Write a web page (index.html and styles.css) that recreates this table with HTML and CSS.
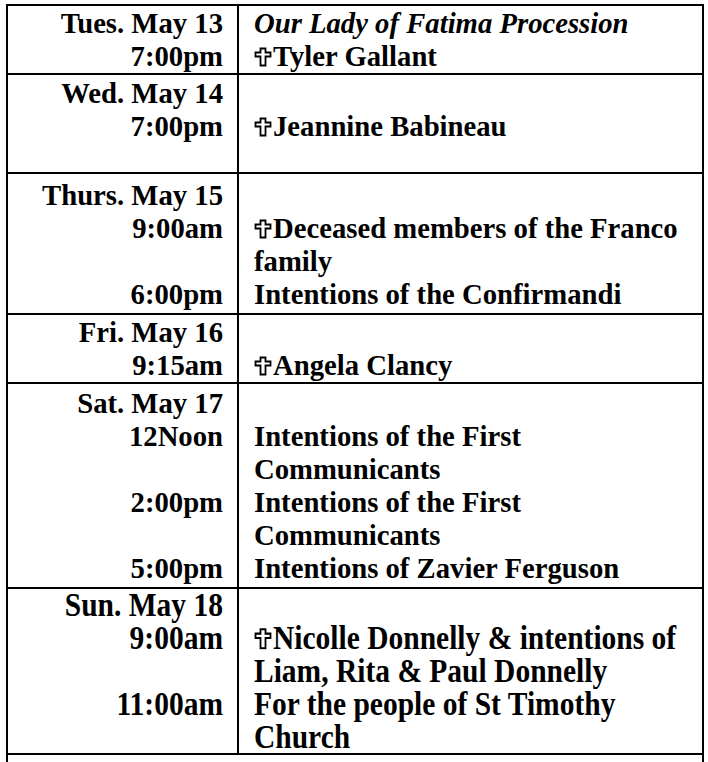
FILE: index.html
```html
<!DOCTYPE html>
<html>
<head>
<meta charset="utf-8">
<link rel="stylesheet" href="styles.css">
</head>
<body>
<table class="sched">
  <tr class="r1">
    <td class="when"><div>Tues. May 13</div><div>7:00pm</div></td>
    <td class="what"><div class="it">Our Lady of Fatima Procession</div><div><svg class="cross" viewBox="0 0 18 20"><path d="M6.5 1.5h5v4h5v4h-5v9h-5v-9h-5v-4h5z"/></svg>Tyler Gallant</div></td>
  </tr>
  <tr class="r2">
    <td class="when"><div>Wed. May 14</div><div>7:00pm</div><div class="short">&nbsp;</div></td>
    <td class="what"><div>&nbsp;</div><div><svg class="cross" viewBox="0 0 18 20"><path d="M6.5 1.5h5v4h5v4h-5v9h-5v-9h-5v-4h5z"/></svg>Jeannine Babineau</div><div class="short">&nbsp;</div></td>
  </tr>
  <tr class="r3">
    <td class="when"><div>Thurs. May 15</div><div>9:00am</div><div>&nbsp;</div><div>6:00pm</div></td>
    <td class="what"><div>&nbsp;</div><div><svg class="cross" viewBox="0 0 18 20"><path d="M6.5 1.5h5v4h5v4h-5v9h-5v-9h-5v-4h5z"/></svg>Deceased members of the Franco</div><div>family</div><div>Intentions of the Confirmandi</div></td>
  </tr>
  <tr class="r4">
    <td class="when"><div>Fri. May 16</div><div>9:15am</div></td>
    <td class="what"><div>&nbsp;</div><div><svg class="cross" viewBox="0 0 18 20"><path d="M6.5 1.5h5v4h5v4h-5v9h-5v-9h-5v-4h5z"/></svg>Angela Clancy</div></td>
  </tr>
  <tr class="r5">
    <td class="when"><div>Sat. May 17</div><div>12Noon</div><div>&nbsp;</div><div>2:00pm</div><div>&nbsp;</div><div>5:00pm</div></td>
    <td class="what"><div>&nbsp;</div><div>Intentions of the First</div><div>Communicants</div><div>Intentions of the First</div><div>Communicants</div><div>Intentions of Zavier Ferguson</div></td>
  </tr>
  <tr class="r6 sun">
    <td class="when"><div>Sun. May 18</div><div>9:00am</div><div>&nbsp;</div><div>11:00am</div><div class="short">&nbsp;</div></td>
    <td class="what"><div>&nbsp;</div><div><svg class="cross" viewBox="0 0 18 20"><path d="M6.5 1.5h5v4h5v4h-5v9h-5v-9h-5v-4h5z"/></svg>Nicolle Donnelly &amp; intentions of</div><div>Liam, Rita &amp; Paul Donnelly</div><div>For the people of St Timothy</div><div class="short">Church</div></td>
  </tr>
  <tr>
    <td class="rest" colspan="2">&nbsp;</td>
  </tr>
</table>
</body>
</html>
```
FILE: styles.css
```css
html, body {
  margin: 0;
  padding: 0;
  background: #fff;
}
body {
  padding: 4px 0 0 6px;
  font-family: "Liberation Serif", "Times New Roman", serif;
  font-weight: bold;
  font-size: 28.7px;
  line-height: 33px;
  color: #000;
}
.sched {
  border-collapse: collapse;
  width: 698px;
  border: 2px solid #000;
}
.sched td {
  padding: 0;
  vertical-align: top;
  border-top: 2px solid #000;
  white-space: nowrap;
}
.sched td.when {
  width: 215px;
  text-align: right;
  padding-right: 14px;
  border-right: 2px solid #000;
}
.sched td.what {
  padding-left: 15px;
  text-align: left;
}
.r1 td { padding-top: 1px; }
.r2 td { padding-top: 2px; }
.r2 .short { height: 29px; }
.r3 td { padding-top: 5px; padding-bottom: 2px; }
.r4 td { padding-top: 1px; }
.r5 td { padding-top: 3px; padding-bottom: 2px; }
.r6 td { padding-top: 0; }
.r6 .short { height: 32px; }
.sun {
  font-size: 29.5px;
}
.sun td div {
  transform: scaleY(1.12);
  transform-origin: 50% 60%;
}
.it {
  font-style: italic;
}
.cross {
  width: 18px;
  height: 20px;
  vertical-align: -1px;
  margin-right: 1px;
}
.cross path {
  fill: none;
  stroke: #000;
  stroke-width: 1.8;
  stroke-linejoin: miter;
}
.rest {
  height: 40px;
}
```
